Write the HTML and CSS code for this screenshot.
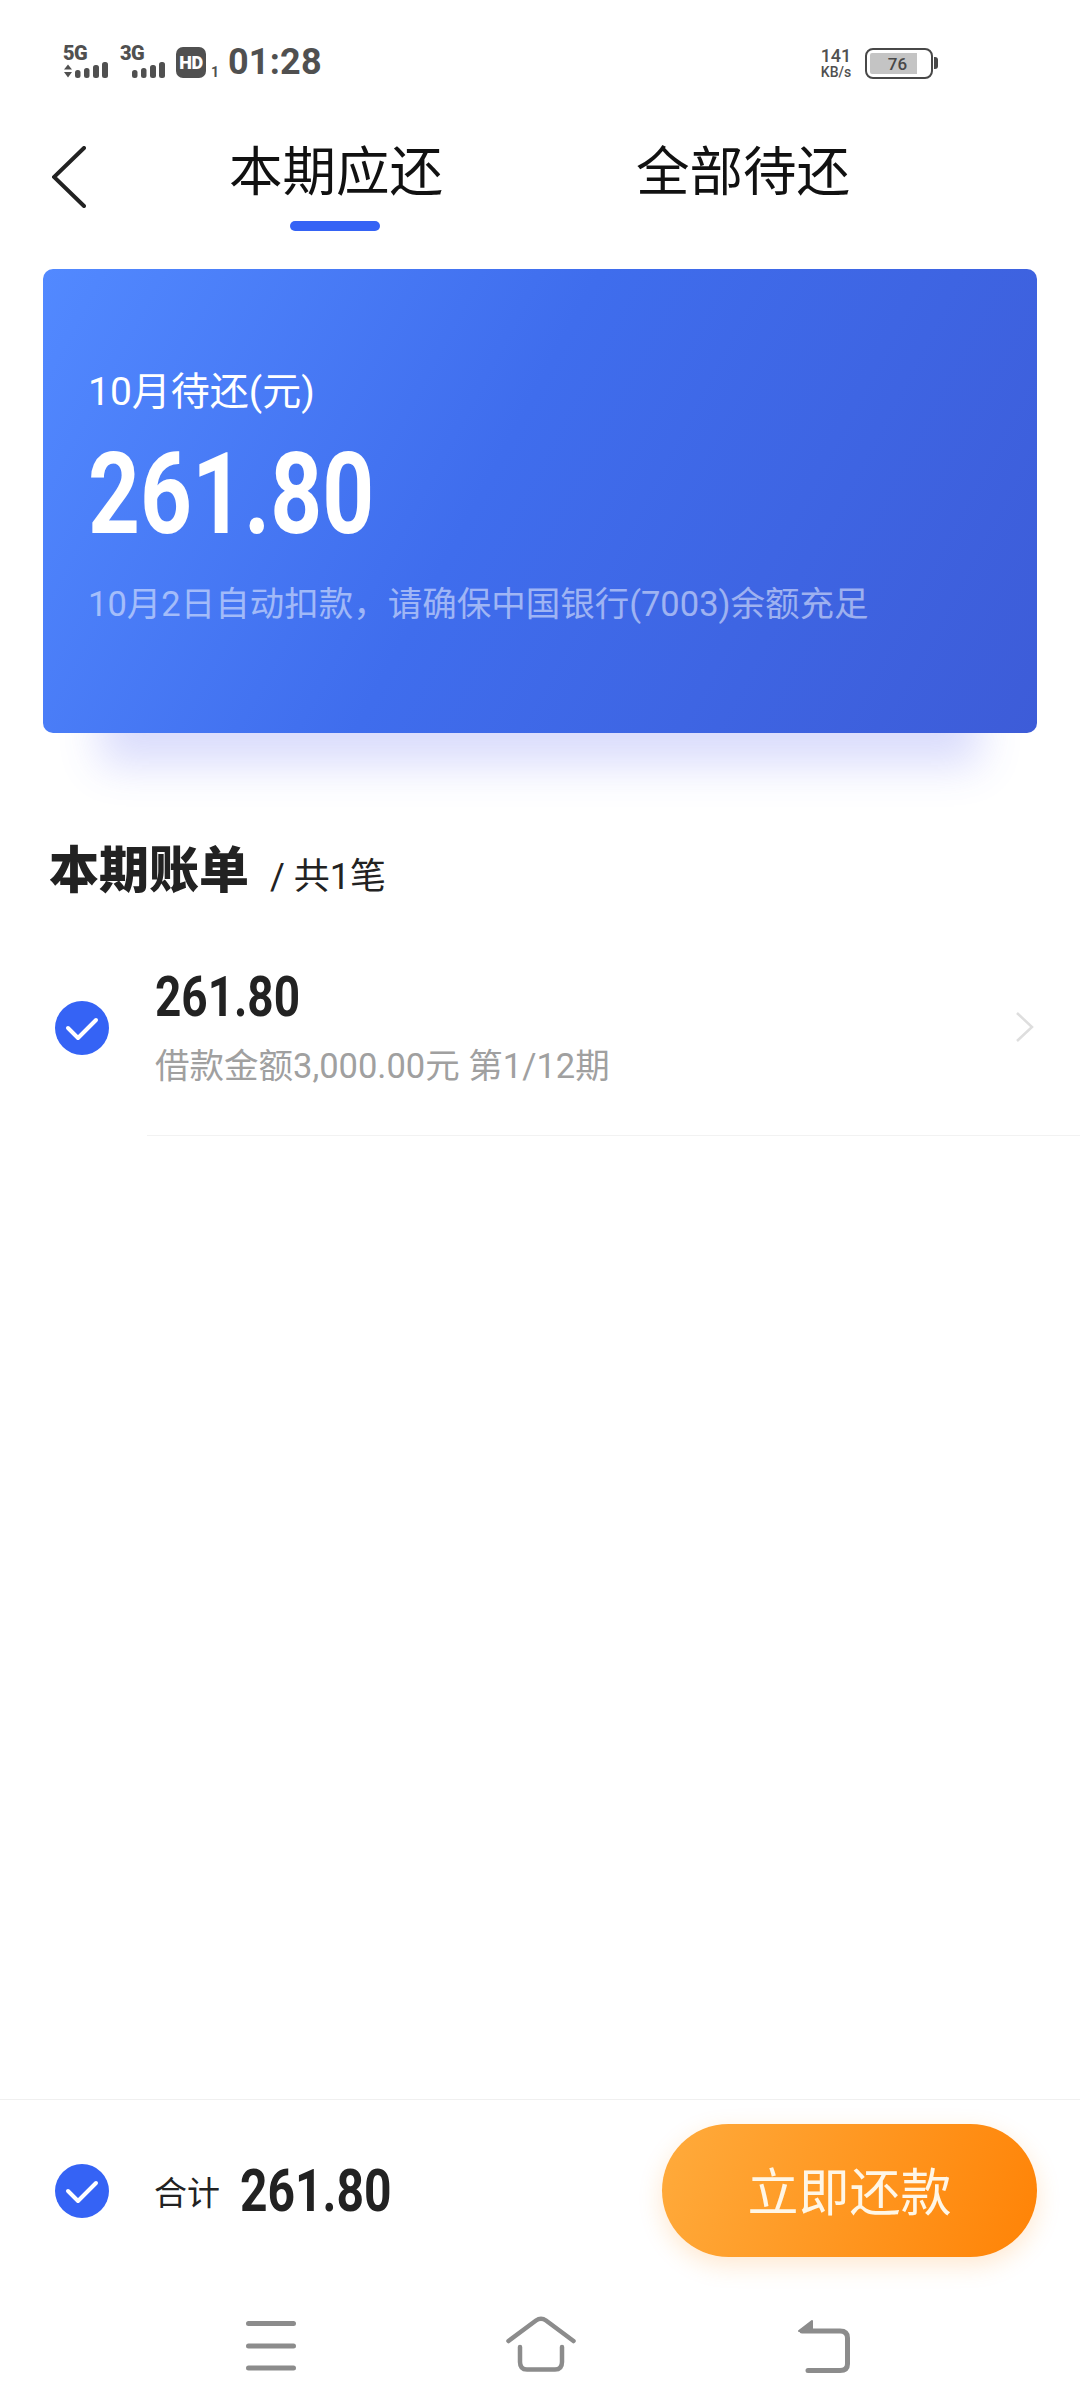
FILE: index.html
```html
<!DOCTYPE html>
<html lang="zh-CN">
<head>
<meta charset="utf-8">
<title>本期应还</title>
<link rel="stylesheet" href="styles.css">
</head>
<body>
<div class="page">
  <header class="status">
    <div class="net">
      <span class="net-label">5G</span>
      <svg class="net-bars" width="48" height="18" viewBox="0 0 48 18"><path class="sb" d="M1 7.500L5 2.500L9 7.500ZM1 10L5 15.500L9 10Z"/><rect class="sb" x="12" y="8" width="5.500" height="8" rx="2.500"/><rect class="sb" x="21" y="6" width="5.500" height="10" rx="2.500"/><rect class="sb" x="30" y="3" width="6" height="13" rx="2.500"/><rect class="sb" x="39" y="0" width="6" height="16" rx="2.500"/></svg>
    </div>
    <div class="net net-second">
      <span class="net-label">3G</span>
      <svg class="net-bars" width="48" height="18" viewBox="0 0 48 18"><rect class="sb" x="12" y="8" width="5.500" height="8" rx="2.500"/><rect class="sb" x="21" y="6" width="5.500" height="10" rx="2.500"/><rect class="sb" x="30" y="3" width="6" height="13" rx="2.500"/><rect class="sb" x="39" y="0" width="6" height="16" rx="2.500"/></svg>
    </div>
    <span class="hd">HD</span>
    <span class="hd-sub">1</span>
    <span class="clock">01:28</span>
    <div class="speed"><span class="speed-num">141</span><span class="speed-unit">KB/s</span></div>
    <div class="battery"><div class="battery-fill"></div><span class="battery-num">76</span></div>
    <div class="battery-tip"></div>
  </header>

  <nav class="tabs">
    <svg class="back" width="34" height="62" viewBox="0 0 34 62"><path d="M32 2L2 31L32 60" fill="none" stroke="#222" stroke-width="4" stroke-linecap="round" stroke-linejoin="miter"/></svg>
    <div class="tab tab-active">本期应还</div>
    <div class="tab tab-other">全部待还</div>
  </nav>

  <main class="main">
    <section class="card">
      <div class="card-label">10月待还(元)</div>
      <div class="card-amount">261.80</div>
      <div class="card-note">10月2日自动扣款，请确保中国银行(7003)余额充足</div>
    </section>

    <div class="bill-head">
      <h2 class="bill-title">本期账单</h2>
      <span class="bill-count">/ 共1笔</span>
    </div>

    <div class="bill-row">
      <span class="check check-row"><svg width="54" height="54" viewBox="0 0 54 54"><circle cx="27" cy="27" r="27" fill="#3563f5"/><path d="M13 27L23 37L41 19" fill="none" stroke="#fff" stroke-width="4" stroke-linecap="round" stroke-linejoin="round"/></svg></span>
      <div class="bill-body">
        <div class="bill-amount">261.80</div>
        <div class="bill-sub">借款金额3,000.00元 第1/12期</div>
      </div>
      <svg class="chevron" width="20" height="32" viewBox="0 0 20 32"><path d="M2 2L17 16L2 30" fill="none" stroke="#dedede" stroke-width="2.500"/></svg>
    </div>
  </main>

  <footer class="foot">
    <div class="foot-bar">
      <span class="check"><svg width="54" height="54" viewBox="0 0 54 54"><circle cx="27" cy="27" r="27" fill="#3563f5"/><path d="M13 27L23 37L41 19" fill="none" stroke="#fff" stroke-width="4" stroke-linecap="round" stroke-linejoin="round"/></svg></span>
      <span class="total-label">合计</span>
      <span class="total-amount">261.80</span>
      <button class="pay">立即还款</button>
    </div>
    <div class="sysnav">
      <svg class="nav-menu" width="50" height="50" viewBox="0 0 50 50"><path d="M2.500 2.500H47.500M2.500 25H47.500M2.500 47H47.500" fill="none" stroke="#8c8c8c" stroke-width="5" stroke-linecap="round"/></svg>
      <svg class="nav-home" width="70" height="56" viewBox="0 0 70 56"><path d="M2.500 25L30 4.500Q35 1 40 4.500L67.500 25" fill="none" stroke="#8c8c8c" stroke-width="4.500" stroke-linecap="round"/><path d="M14 31V46Q14 53.500 21 53.500H49Q56 53.500 56 46V31" fill="none" stroke="#8c8c8c" stroke-width="4.500" stroke-linecap="round"/></svg>
      <svg class="nav-back" width="52" height="54" viewBox="0 0 52 54"><path d="M1 11L14 1V11Z" fill="#8c8c8c" stroke="#8c8c8c" stroke-width="2" stroke-linejoin="round"/><path d="M4 11H42Q49.500 11 49.500 18V44Q49.500 50.500 42 50.500H10" fill="none" stroke="#8c8c8c" stroke-width="5" stroke-linecap="round"/></svg>
    </div>
  </footer>
</div>
</body>
</html>
```
FILE: styles.css
```css
* { box-sizing: border-box; }
html, body { margin: 0; padding: 0; background: #fff; }
body { font-family: Roboto, "Noto Sans CJK SC", sans-serif; color: #222; }
.page { width: 1080px; height: 2408px; display: flex; flex-direction: column; overflow: hidden; }

/* status bar */
.status { height: 120px; padding: 45px 0 0 63px; display: flex; align-items: flex-start; color: #505050; }
.net { width: 48px; display: flex; flex-direction: column; }
.net-second { margin-left: 9px; }
.net-label { font: 900 20px/16px Roboto, sans-serif; height: 17px; letter-spacing: -.5px; }
.net-bars { display: block; }
.sb { fill: #505050; }
.hd { margin: 2px 0 0 8px; width: 30px; height: 31px; border-radius: 7px; background: #505050; color: #fff; font: 900 18px/31px Roboto, sans-serif; text-align: center; letter-spacing: -.5px; }
.hd-sub { margin: 21px 0 0 5px; width: 7px; font: 700 14px/13px Roboto, sans-serif; }
.clock { margin: 2px 0 0 10px; width: 101px; font: 700 36px/31px Roboto, sans-serif; letter-spacing: .2px; }
.speed { margin: 2px 0 0 489px; width: 36px; display: flex; flex-direction: column; align-items: center; font-family: Roboto, sans-serif; font-weight: 500; }
.speed-num { font-size: 18px; line-height: 18px; }
.speed-unit { font-size: 14px; line-height: 14px; white-space: nowrap; }
.battery { position: relative; margin: 3px 0 0 11px; width: 68px; height: 31px; border: 2.500px solid #484848; border-radius: 8px; display: flex; align-items: center; justify-content: center; }
.battery-fill { position: absolute; left: 3px; top: 3px; bottom: 3px; width: 47px; background: #c4c4c4; border-radius: 2px 0 0 2px; }
.battery-num { position: relative; margin-left: -3px; font: 500 17px/26px Roboto, sans-serif; color: #484848; }
.battery-tip { margin: 12px 0 0 1px; width: 4px; height: 12px; background: #484848; border-radius: 0 3px 3px 0; }

/* tabs */
.tabs { position: relative; height: 149px; display: flex; align-items: flex-start; }
.back { margin: 26px 0 0 52px; }
.tab { font-size: 53.500px; line-height: 66px; color: #111; margin-top: 20px; white-space: nowrap; }
.tab-active { position: relative; margin-left: 143px; }
.tab-active::after { content: ""; position: absolute; left: 61px; top: 81px; width: 90px; height: 10px; border-radius: 5px; background: #3563f5; }
.tab-other { margin-left: 193px; }

/* summary card */
.main { flex: 1; }
.card { margin-left: 43px; width: 994px; height: 464px; padding: 96px 45px 0; border-radius: 10px; color: #fff; background: linear-gradient(118deg, #5289ff 0%, #3f6ded 45%, #3d5cd8 100%); box-shadow: 0 89px 40px -57px rgba(70, 80, 240, .2); }
.card-label { font-size: 39px; line-height: 54px; white-space: nowrap; }
.card-amount { margin-top: 20px; font: 700 114px/110px Roboto, sans-serif; transform: scaleX(.795); transform-origin: left center; }
.card-note { margin-top: 31px; font-size: 34.500px; line-height: 48px; color: rgba(255, 255, 255, .5); white-space: nowrap; }

/* bill list */
.bill-head { margin: 103px 0 0 49px; display: flex; align-items: flex-start; height: 70px; }
.bill-title { margin: 0; font-size: 50px; line-height: 70px; font-weight: 900; color: #222; }
.bill-count { margin: 16px 0 0 21px; font-size: 36px; line-height: 50px; color: #222; }
.bill-row { position: relative; margin-top: 30px; margin-left: 55px; height: 200px; padding-right: 45px; display: flex; align-items: flex-start; }
.bill-row::after { content: ""; position: absolute; left: 92px; right: 0; bottom: 0; height: 1.500px; background: #f2f2f2; }
.check { display: block; width: 54px; height: 54px; flex: none; }
.check-row { margin-top: 65px; }
.check svg { display: block; }
.bill-body { margin: 31px 0 0 46px; flex: 1; }
.bill-amount { font: 700 56px/60px Roboto, sans-serif; color: #222; transform: scaleX(.82); transform-origin: left center; }
.bill-sub { margin-top: 16px; font-size: 34.500px; line-height: 46px; color: #a0a0a0; white-space: nowrap; }
.chevron { margin-top: 75px; }

/* footer */
.foot { height: 309px; }
.foot-bar { height: 186px; padding: 0 43px 3px 55px; border-top: 1.500px solid #f0f0f0; display: flex; align-items: center; }
.total-label { margin-left: 45px; font-size: 33px; color: #222; }
.total-amount { display: inline-block; margin-left: 20px; font: 700 60px/60px Roboto, sans-serif; color: #222; transform: scaleX(.8); transform-origin: left center; }
.pay { margin-left: auto; margin-top: -1px; width: 375px; height: 133px; padding: 0 0 4px; border: 0; border-radius: 67px; font: 400 51px "Noto Sans CJK SC", sans-serif; color: #fff6e6; background: linear-gradient(110deg, #ffab3c 0%, #ff8306 100%); box-shadow: 0 8px 24px rgba(255, 140, 20, .2); }
.sysnav { height: 123px; padding: 36px 0 0 246px; display: flex; align-items: flex-start; }
.nav-home { margin: -5px 0 0 210px; }
.nav-back { margin: -1px 0 0 222px; }
```
